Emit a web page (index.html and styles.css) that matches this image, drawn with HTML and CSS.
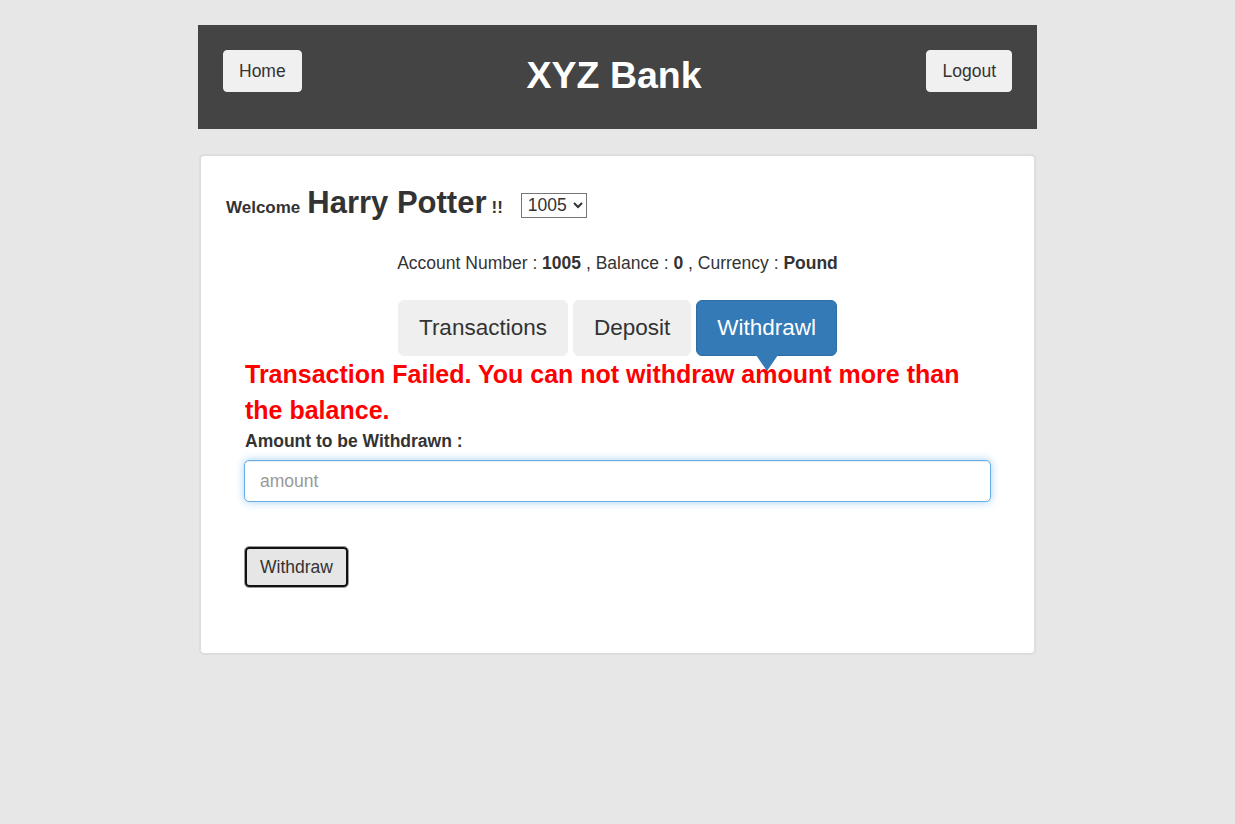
FILE: index.html
```html
<!DOCTYPE html>
<html lang="en">
<head>
<meta charset="utf-8">
<title>XYZ Bank</title>
<link rel="stylesheet" href="styles.css">
</head>
<body>
<div class="page">
  <header class="topbar">
    <button class="btn home">Home</button>
    <h2 class="brand">XYZ Bank</h2>
    <button class="btn logout">Logout</button>
  </header>

  <main class="card">
    <div class="welcome">
      <strong class="w-small">Welcome</strong>
      <span class="w-name">Harry Potter</span>
      <strong class="w-bang">!!</strong>
      <select class="acct-select"><option>1005</option></select>
    </div>

    <div class="acct-info">
      Account Number : <strong>1005</strong> , Balance : <strong>0</strong> , Currency : <strong>Pound</strong>
    </div>

    <nav class="tabs">
      <button class="tab">Transactions</button>
      <button class="tab">Deposit</button>
      <button class="tab active">Withdrawl</button>
    </nav>

    <section class="form-area">
      <div class="error">Transaction Failed. You can not withdraw amount more than the balance.</div>
      <label class="lbl">Amount to be Withdrawn :</label>
      <input class="amount" type="text" placeholder="amount">
      <button class="btn submit">Withdraw</button>
    </section>
  </main>
</div>
</body>
</html>
```

FILE: styles.css
```css
* { box-sizing: border-box; }

html, body {
  margin: 0;
  padding: 0;
  background: #e7e7e7;
}

body {
  font-family: "Liberation Sans", Arial, Helvetica, sans-serif;
  font-size: 17.5px;
  line-height: 1.42857;
  color: #333;
}

.page {
  width: 839px;
  margin: 25px auto 0;
  display: flex;
  flex-direction: column;
  gap: 25px;
}

.topbar {
  height: 104px;
  background: #444444;
  padding: 25px 25px;
  display: flex;
  justify-content: space-between;
  align-items: flex-start;
}

.btn {
  font-family: inherit;
  font-size: 17.5px;
  line-height: 25px;
  color: #333;
  background: #f0f0f0;
  border: 1px solid #f0f0f0;
  border-radius: 4px;
  padding: 7.5px 15px 8.5px;
  height: 42px;
  cursor: pointer;
}

.brand {
  margin: 5px 0 0;
  font-size: 37.5px;
  line-height: 41px;
  font-weight: bold;
  color: #fff;
}

.card {
  margin: 0 1px;
  background: #fff;
  border: 2px solid #dddddd;
  border-radius: 5px;
  padding: 26px 43px 65px;
  display: flex;
  flex-direction: column;
}

.welcome {
  display: flex;
  align-items: baseline;
  margin-left: -18px;
  height: 42px;
}

.w-small {
  font-size: 17px;
  margin-right: 7px;
}

.w-name {
  font-size: 31px;
  font-weight: bold;
  line-height: 42px;
  margin-right: 5px;
}

.w-bang {
  font-size: 17px;
  margin-right: 18px;
}

.acct-select {
  font-family: inherit;
  font-size: 17.5px;
  height: 25px;
  width: 66px;
  padding: 0 0 0 2px;
  border: 1px solid #767676;
  border-radius: 0;
  background: #fff;
  color: #333;
  align-self: center;
  position: relative;
  top: 2px;
}

.acct-info {
  text-align: center;
  margin-top: 27px;
  line-height: 25px;
}

.tabs {
  display: flex;
  justify-content: center;
  gap: 5px;
  margin-top: 24px;
}

.tab {
  position: relative;
  font-family: inherit;
  font-size: 22.5px;
  line-height: 30px;
  color: #333;
  background: #efefef;
  border: 1px solid #efefef;
  border-radius: 6px;
  padding: 12px 20px 12px;
  height: 56px;
  cursor: pointer;
}

.tab.active {
  background: #337ab7;
  border-color: #2e6da4;
  color: #fff;
}

.tab.active::after {
  content: "";
  position: absolute;
  left: 50%;
  bottom: -16px;
  margin-left: -11px;
  border-left: 11px solid transparent;
  border-right: 11px solid transparent;
  border-top: 16px solid #337ab7;
}

.form-area {
  display: flex;
  flex-direction: column;
  align-items: flex-start;
}

.error {
  color: #ff0000;
  font-weight: bold;
  font-size: 25px;
  line-height: 36px;
  padding: 0 28px 0 1px;
}

.lbl {
  font-weight: bold;
  font-size: 17.5px;
  line-height: 25px;
  margin-top: 1px;
  margin-bottom: 6px;
  padding-left: 1px;
}

.amount {
  width: 100%;
  height: 42px;
  font-family: inherit;
  font-size: 17.5px;
  color: #555;
  padding: 0 15px;
  border: 1px solid #66afe9;
  border-radius: 5px;
  box-shadow: inset 0 1px 1px rgba(0,0,0,.075), 0 0 8px rgba(102,175,233,.6);
  outline: none;
}

.amount::placeholder {
  color: #999;
}

.submit {
  margin-top: 44px;
  background: #e6e6e6;
  border: 1px solid #9a9a9a;
  box-shadow: inset 0 0 0 2px #111;
  padding: 7.5px 15px 8.5px;
  width: 105px;
  border-radius: 5px;
}
```
